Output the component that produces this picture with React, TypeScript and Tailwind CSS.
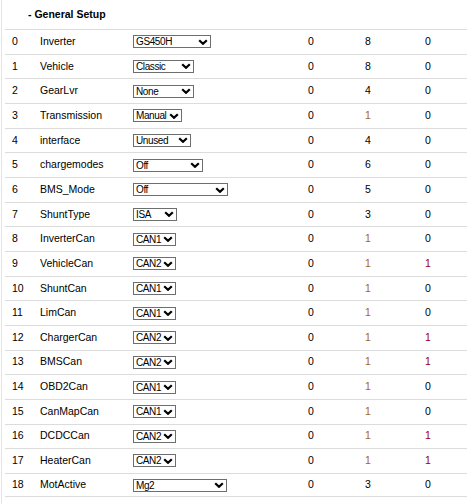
import React from 'react';

interface ParamRow {
  name: string;
  value: string;
  width: string;
  min: number;
  max: number;
  def: number;
}

// Parameter list for the general setup block
const ROWS: ParamRow[] = [
  { name: 'Inverter', value: 'GS450H', width: 'w-[78px]', min: 0, max: 8, def: 0 },
  { name: 'Vehicle', value: 'Classic', width: 'w-[61px]', min: 0, max: 8, def: 0 },
  { name: 'GearLvr', value: 'None', width: 'w-[61px]', min: 0, max: 4, def: 0 },
  { name: 'Transmission', value: 'Manual', width: 'w-[49px]', min: 0, max: 1, def: 0 },
  { name: 'interface', value: 'Unused', width: 'w-[58px]', min: 0, max: 4, def: 0 },
  { name: 'chargemodes', value: 'Off', width: 'w-[70px]', min: 0, max: 6, def: 0 },
  { name: 'BMS_Mode', value: 'Off', width: 'w-[95px]', min: 0, max: 5, def: 0 },
  { name: 'ShuntType', value: 'ISA', width: 'w-[44px]', min: 0, max: 3, def: 0 },
  { name: 'InverterCan', value: 'CAN1', width: 'w-[43px]', min: 0, max: 1, def: 0 },
  { name: 'VehicleCan', value: 'CAN2', width: 'w-[43px]', min: 0, max: 1, def: 1 },
  { name: 'ShuntCan', value: 'CAN1', width: 'w-[43px]', min: 0, max: 1, def: 0 },
  { name: 'LimCan', value: 'CAN1', width: 'w-[43px]', min: 0, max: 1, def: 0 },
  { name: 'ChargerCan', value: 'CAN2', width: 'w-[43px]', min: 0, max: 1, def: 1 },
  { name: 'BMSCan', value: 'CAN2', width: 'w-[43px]', min: 0, max: 1, def: 1 },
  { name: 'OBD2Can', value: 'CAN1', width: 'w-[43px]', min: 0, max: 1, def: 0 },
  { name: 'CanMapCan', value: 'CAN1', width: 'w-[43px]', min: 0, max: 1, def: 0 },
  { name: 'DCDCCan', value: 'CAN2', width: 'w-[43px]', min: 0, max: 1, def: 1 },
  { name: 'HeaterCan', value: 'CAN2', width: 'w-[43px]', min: 0, max: 1, def: 1 },
  { name: 'MotActive', value: 'Mg2', width: 'w-[94px]', min: 0, max: 3, def: 0 },
];

function Chevron() {
  return (
    <svg
      width="10"
      height="6"
      viewBox="0 0 10 6"
      className="pointer-events-none absolute right-[3px] top-1/2 -translate-y-1/2"
    >
      <path d="M1.2 1.2 L5 4.8 L8.8 1.2" fill="none" stroke="#000" strokeWidth="2.2" />
    </svg>
  );
}

function SmallSelect({ value, width }: { value: string; width: string }) {
  return (
    <div className={`relative inline-block ${width} h-[13px]`}>
      <select
        defaultValue={value}
        className="block h-[13px] w-full appearance-none overflow-hidden rounded-none border border-[#6e6e6e] bg-white py-0 pl-[2px] pr-[11px] text-[10px] leading-[11px] tracking-[-0.4px] text-black outline-none"
      >
        <option value={value}>{value}</option>
      </select>
      <Chevron />
    </div>
  );
}

export default function App() {
  return (
    <div
      className="min-h-[504px] w-[467px] overflow-hidden bg-white text-[10.5px] text-black"
      style={{ fontFamily: '"Liberation Sans", Arial, sans-serif' }}
    >
      <div className="ml-px min-h-[504px] border-l border-[#e4e4e4] pl-[3px]">
        {/* Section header */}
        <div className="flex h-[29px] items-center pl-[23px] font-bold">- General Setup</div>

        {ROWS.map((row, i) => (
          <div
            key={row.name}
            className={`flex h-[24.67px] items-center border-t border-[#dcdcdc] ${
              i === ROWS.length - 1 ? 'border-b' : ''
            }`}
          >
            <div className="w-[35px] shrink-0 pl-[7px]">{i}</div>
            <div className="w-[93px] shrink-0">{row.name}</div>
            <div className="flex w-[150px] shrink-0 items-center">
              <SmallSelect value={row.value} width={row.width} />
            </div>
            <div className="w-[56px] shrink-0 text-center">{row.min}</div>
            <div
              className={`w-[58px] shrink-0 text-center ${
                row.max === 1 ? 'text-[#a86800]' : ''
              }`}
            >
              {row.max}
            </div>
            <div
              className={`w-[62px] shrink-0 text-center ${
                row.def === 1 ? 'text-[#9a0000]' : ''
              }`}
            >
              {row.def}
            </div>
          </div>
        ))}
      </div>
    </div>
  );
}
